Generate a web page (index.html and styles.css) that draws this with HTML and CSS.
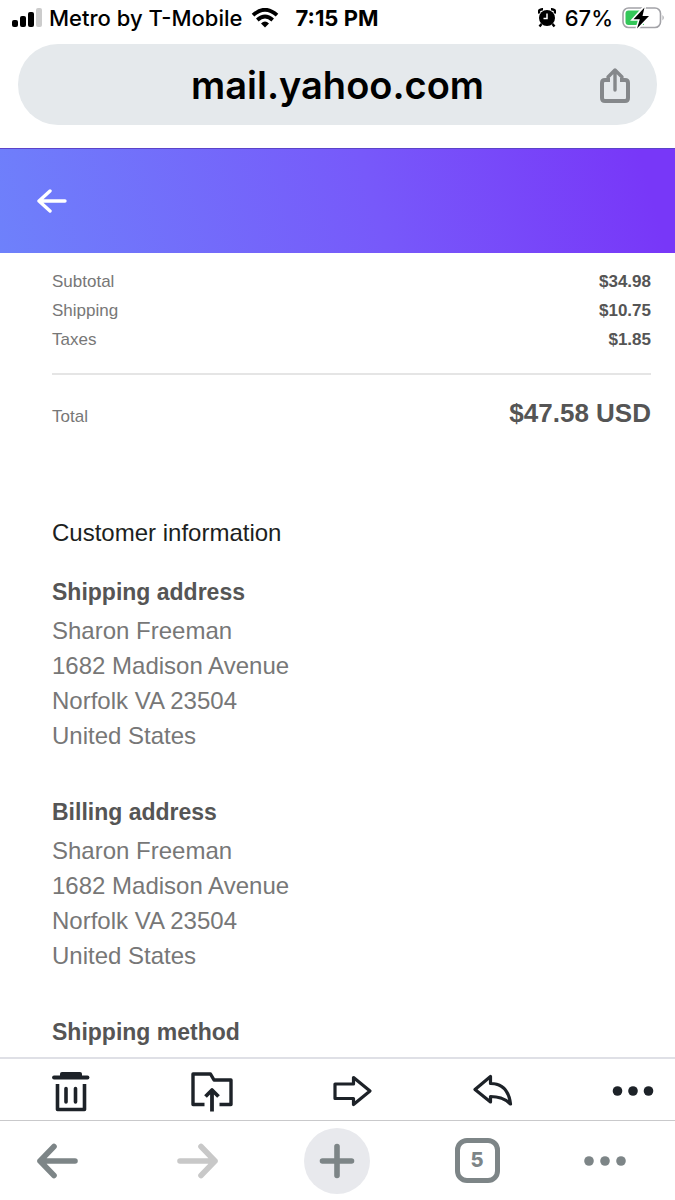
FILE: index.html
```html
<!DOCTYPE html>
<html lang="en">
<head>
<meta charset="utf-8">
<meta name="viewport" content="width=device-width, initial-scale=1">
<title>mail.yahoo.com</title>
<link rel="stylesheet" href="styles.css">
</head>
<body>
<div class="status-bar">
  <svg class="signal" width="30" height="20" viewBox="0 0 30 20" aria-hidden="true">
    <rect x="0" y="12" width="6" height="7" rx="2"/>
    <rect x="8" y="8" width="6" height="11" rx="2"/>
    <rect x="16" y="4" width="6" height="15" rx="2"/>
    <rect x="24" y="0" width="6" height="19" rx="2" fill="#ccc"/>
  </svg>
  <span class="carrier">Metro by T-Mobile</span>
  <svg class="wifi" width="28" height="20" viewBox="0 0 28 20" aria-hidden="true" fill="none" stroke="#000" stroke-width="3.8">
    <path d="M2 7.2Q14-3.6 26 7.2"/>
    <path d="M6.3 12Q14 5 21.7 12"/>
    <path d="M10 15.4Q14 11.6 18 15.4L14 19.4Z" fill="#000" stroke="none"/>
  </svg>
  <span class="clock">7:15 PM</span>
  <svg class="alarm" width="18" height="20" viewBox="0 0 18 20" aria-hidden="true">
    <path d="M1 5.5Q.2 1 5 1.2M17 5.5Q17.800 1 13 1.2" fill="none" stroke="#000" stroke-width="2.400"/>
    <path d="M3.500 16L1.500 18.500M14.500 16L16.500 18.500" stroke="#000" stroke-width="2.400"/>
    <circle cx="9" cy="10" r="8"/>
    <path d="M9 5.500V10.500H5.500" fill="none" stroke="#fff" stroke-width="1.500"/>
  </svg>
  <span class="charge">67%</span>
  <svg class="battery" width="43" height="24" viewBox="0 0 43 24" aria-hidden="true">
    <rect x="1" y="2" width="37.500" height="19.500" rx="5.500" fill="#fff" stroke="#a3a3a8" stroke-width="1.600"/>
    <path d="M40.500 9Q43 11.700 40.500 14.500Z" fill="#a3a3a8"/>
    <path d="M6.500 4.500H22V19H6.500Q3.500 19 3.500 16V7.500Q3.500 4.500 6.500 4.500Z" fill="#34c759"/>
    <path d="M22.500 1L11.500 13.300H17.800L14.800 23L27 10H20.700Z" stroke="#fff" stroke-width="3"/>
    <path d="M22.500 1.500L11.500 13.300H17.800L15 22.500L27 10H20.500Z"/>
  </svg>
</div>

<div class="address-bar">
  <span class="address">mail.yahoo.com</span>
  <button class="share" aria-label="Share">
    <svg width="32" height="36" viewBox="0 0 32 36" fill="none" stroke="#85888b" stroke-width="4" stroke-linejoin="round">
      <path d="M11 13H6Q3 13 3 16V31Q3 34 6 34H26Q29 34 29 31V16Q29 13 26 13H21"/>
      <path d="M16 23V3M9 10L16 3L23 10" stroke-width="3.400" stroke-linecap="round"/>
    </svg>
  </button>
</div>

<header class="mail-header">
  <button class="back" aria-label="Back to inbox">
    <svg width="30" height="32" viewBox="0 0 30 32" fill="none" stroke="#fff" stroke-width="3.400" stroke-linecap="round" stroke-linejoin="round">
      <path d="M28 16H2M13 6L2 16L13 26"/>
    </svg>
  </button>
</header>

<main class="message">
  <table class="costs">
    <tr><th scope="row">Subtotal</th><td>$34.98</td></tr>
    <tr><th scope="row">Shipping</th><td>$10.75</td></tr>
    <tr><th scope="row">Taxes</th><td>$1.85</td></tr>
  </table>
  <hr class="divider">
  <div class="total">
    <span>Total</span>
    <strong class="total-amount">$47.58 USD</strong>
  </div>

  <h2 class="section-title">Customer information</h2>
  <section class="detail">
    <h3 class="detail-title">Shipping address</h3>
    <address class="lines">Sharon Freeman<br>1682 Madison Avenue<br>Norfolk VA 23504<br>United States</address>
  </section>
  <section class="detail">
    <h3 class="detail-title">Billing address</h3>
    <address class="lines">Sharon Freeman<br>1682 Madison Avenue<br>Norfolk VA 23504<br>United States</address>
  </section>
  <section class="detail">
    <h3 class="detail-title">Shipping method</h3>
  </section>
</main>

<div class="mail-actions" role="toolbar" aria-label="Message actions">
  <button class="action" aria-label="Delete">
    <svg width="46" height="46" viewBox="0 0 46 46" fill="none" stroke="#1d2228" stroke-width="3.600" stroke-linecap="round" stroke-linejoin="round">
      <path d="M6 9.500H39.500" stroke-width="3.800"/>
      <path d="M12 9V6Q12 4 14 4H32Q34 4 34 6V9Z" fill="#1d2228" stroke="none"/>
      <path d="M9.500 16V41.500H36.500V16" stroke-linecap="butt"/>
      <path d="M18 20.500V34M27.500 20.500V34"/>
    </svg>
  </button>
  <button class="action" aria-label="Move to folder">
    <svg width="46" height="46" viewBox="0 0 46 46" fill="none" stroke="#1d2228" stroke-width="3.400" stroke-linecap="butt" stroke-linejoin="round">
      <path d="M15.500 36.500H4V6H21.500L25 12H42V36.500H30.500"/>
      <path d="M23 43.500V22M16.500 28.500L23 22L29.500 28.500" stroke-width="3.800"/>
    </svg>
  </button>
  <button class="action" aria-label="Forward">
    <svg width="46" height="46" viewBox="0 0 46 46" fill="none" stroke="#1d2228" stroke-width="3.200" stroke-linejoin="round">
      <path d="M6 16H24.500V9.500L41 23L24.500 36.500V30.500H6Z"/>
    </svg>
  </button>
  <button class="action" aria-label="Reply">
    <svg width="46" height="46" viewBox="0 0 46 46" fill="none" stroke="#1d2228" stroke-width="3.200" stroke-linejoin="round">
      <path d="M5 21.500L20.500 8.500V15.500Q38 15.500 40.500 36Q33 28.500 20.500 28.500V34Z"/>
    </svg>
  </button>
  <button class="action" aria-label="More actions">
    <svg width="46" height="46" viewBox="0 0 46 46" fill="#1d2228">
      <circle cx="7.500" cy="23" r="4.800"/><circle cx="23" cy="23" r="4.800"/><circle cx="38.500" cy="23" r="4.800"/>
    </svg>
  </button>
</div>

<nav class="browser-bar" aria-label="Browser">
  <button class="tool" aria-label="Back">
    <svg width="42" height="42" viewBox="0 0 42 42" fill="none" stroke="#7d8587" stroke-width="5.600" stroke-linecap="round" stroke-linejoin="round">
      <path d="M39 21H4M18 6.500L4 21L18 35.500"/>
    </svg>
  </button>
  <button class="tool" aria-label="Forward" disabled>
    <svg width="42" height="42" viewBox="0 0 42 42" fill="none" stroke="#c8c8c8" stroke-width="5.600" stroke-linecap="round" stroke-linejoin="round">
      <path d="M4 21H39M25 6.500L39 21L25 35.500"/>
    </svg>
  </button>
  <button class="tool new-tab" aria-label="New tab">
    <svg width="42" height="42" viewBox="0 0 42 42" fill="none" stroke="#7d8587" stroke-width="5.600" stroke-linecap="round">
      <path d="M21 6.500V35.500M6.500 21H35.500"/>
    </svg>
  </button>
  <button class="tool" aria-label="5 open tabs"><span class="tab-count">5</span></button>
  <button class="tool menu" aria-label="Menu">
    <svg width="42" height="42" viewBox="0 0 42 42" fill="#7d8587">
      <circle cx="5" cy="21" r="4.800"/><circle cx="21" cy="21" r="4.800"/><circle cx="37" cy="21" r="4.800"/>
    </svg>
  </button>
</nav>
</body>
</html>
```
FILE: styles.css
```css
* {
  box-sizing: border-box;
}

body {
  margin: 0;
  min-height: 100vh;
  display: flex;
  flex-direction: column;
  background: #fff;
  font-family: "Liberation Sans", Arial, sans-serif;
  color: #777;
}

button {
  display: grid;
  place-items: center;
  padding: 0;
  border: 0;
  background: none;
  font: inherit;
}

svg {
  display: block;
  flex: none;
}

.status-bar {
  display: flex;
  align-items: center;
  height: 36px;
  margin-bottom: 8px;
  padding: 0 10px 0 12px;
  font-family: Inter, sans-serif;
  font-size: 22px;
  font-weight: 500;
  line-height: 36px;
  color: #000;
  white-space: nowrap;
}

.carrier {
  margin-left: 7px;
}

.wifi {
  margin-left: 9px;
}

.clock {
  margin-left: 16px;
  font-weight: 700;
}

.alarm {
  margin-left: auto;
}

.charge {
  margin: 0 9px;
}

.address-bar {
  display: grid;
  grid-template-columns: 1fr auto 1fr;
  align-items: center;
  height: 81px;
  margin: 0 18px 23px;
  padding: 0 26px;
  border-radius: 40px;
  background: #e5e9ec;
}

.address {
  grid-column: 2;
  font-family: Inter, sans-serif;
  font-size: 38px;
  font-weight: 600;
  color: #000;
}

.share {
  justify-self: end;
}

.mail-header {
  display: flex;
  align-items: center;
  height: 105px;
  padding: 0 37px;
  border-top: 1px solid #5b43c9;
  background: linear-gradient(75deg, #6e81fb, #7759fa 55%, #7837f8 95%);
}

.message {
  flex: 1;
  padding: 14px 24px 0 52px;
}

.costs {
  width: 100%;
  border-collapse: collapse;
  font-size: 17px;
  line-height: 29px;
}

.costs th {
  padding: 0;
  font-weight: 400;
  text-align: left;
}

.costs td {
  padding: 0;
  font-weight: 700;
  text-align: right;
  color: #555;
}

.divider {
  height: 2px;
  margin: 19px 0 18px;
  border: 0;
  background: #e5e5e5;
}

.total {
  display: flex;
  align-items: baseline;
  justify-content: space-between;
  font-size: 17px;
  line-height: 20px;
}

.total-amount {
  font-size: 26px;
  line-height: 40px;
  color: #555;
}

.section-title {
  margin: 82px 0 25px;
  font-size: 24px;
  font-weight: 400;
  line-height: 35px;
  color: #1d1f22;
}

.detail + .detail {
  margin-top: 42px;
}

.detail-title {
  margin: 0 0 3px;
  font-size: 23px;
  line-height: 35px;
  color: #555;
}

.lines {
  font-size: 24px;
  font-style: normal;
  line-height: 35px;
}

.mail-actions {
  display: flex;
  align-items: center;
  justify-content: space-between;
  height: 63px;
  padding: 2px 19px 0 48px;
  border-top: 2px solid #dfe0e6;
}

.browser-bar {
  display: flex;
  align-items: center;
  justify-content: space-between;
  height: 80px;
  padding: 0 49px 0 24px;
  border-top: 1px solid #c9c9cb;
}

.tool {
  width: 66px;
  height: 66px;
}

.new-tab {
  border-radius: 50%;
  background: #e8e9ed;
}

.menu {
  width: 42px;
}

.tab-count {
  width: 45px;
  height: 45px;
  border: 5px solid #7d8587;
  border-radius: 12px;
  font-family: Inter, sans-serif;
  font-size: 20px;
  font-weight: 800;
  line-height: 35px;
  text-align: center;
  color: #7d8587;
}
```
